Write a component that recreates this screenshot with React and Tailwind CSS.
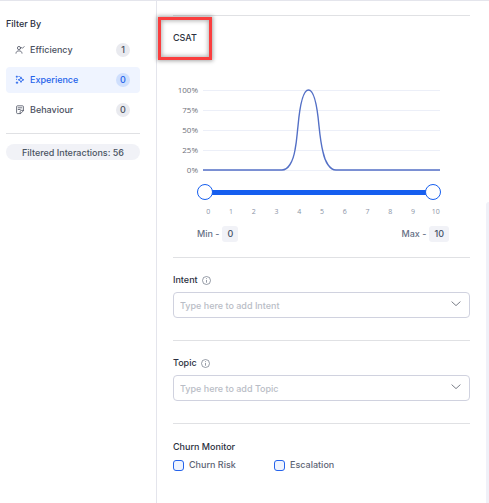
import { useState } from "react";

const FILTERS = [
  { name: "Efficiency", count: 1, icon: PersonIcon },
  { name: "Experience", count: 0, icon: SparkIcon },
  { name: "Behaviour", count: 0, icon: NoteIcon },
];
const LEVELS = ["100%", "75%", "50%", "25%", "0%"];
const TICKS = [0, 1, 2, 3, 4, 5, 6, 7, 8, 9, 10];

function PersonIcon() {
  return (
    <svg className="size-[10px] shrink-0" viewBox="0 0 10 10" fill="none" stroke="currentColor" strokeWidth="0.8" strokeLinecap="round" aria-hidden="true">
      <circle cx="4" cy="3" r="1.6" />
      <path d="M1 8.2C1.2 6.4 2.2 5.9 4 5.9S6.8 6.4 7 8.2" />
      <path d="M6.6 2.5l.8.8 1.7-1.7" />
    </svg>
  );
}

function SparkIcon() {
  return (
    <svg className="size-[10px] shrink-0" viewBox="0 0 10 10" fill="none" stroke="currentColor" strokeWidth="0.9" strokeLinejoin="round" strokeLinecap="round" aria-hidden="true">
      <path d="M6 2.2l.8 1.8 2 .8-2 .8L6 7.4l-.8-1.8-2-.8 2-.8z" />
      <path d="M1.2 1.7h1.2M1.8 1.1v1.2M1.2 7.7h1.6M2 6.9v1.6M3.9 1.5h.4M1.4 4.3h.3" />
    </svg>
  );
}

function NoteIcon() {
  return (
    <svg className="size-[10px] shrink-0" viewBox="0 0 10 10" fill="none" stroke="currentColor" strokeWidth="0.8" strokeLinejoin="round" strokeLinecap="round" aria-hidden="true">
      <path d="M8.4 5.4V1.7a.9.9 0 0 0-.9-.9h-5a.9.9 0 0 0-.9.9v6c0 .5.4.9.9.9h2.7z" />
      <path d="M8.4 5.4H6.2c-.6 0-1 .4-1 1v2.2M3.2 2.8h3.6M3.2 4.5h2" />
    </svg>
  );
}

function InfoIcon() {
  return (
    <svg className="size-[9px] text-gray-500" viewBox="0 0 9 9" fill="none" stroke="currentColor" strokeWidth="0.7" aria-hidden="true">
      <circle cx="4.5" cy="4.5" r="4" />
      <path d="M4.5 4v2.7M4.5 2.2v.9" />
    </svg>
  );
}

function Sidebar() {
  return (
    <aside className="w-[157px] shrink-0 border-r border-[#e4e5ec] pt-[17px] pr-4 pl-[6px]">
      <h2 className="mb-[7px] leading-3">Filter By</h2>
      <nav className="flex flex-col gap-1">
        {FILTERS.map(({ name, count, icon: Icon }) => {
          const active = name === "Experience";
          return (
            <button
              key={name}
              type="button"
              className={`flex h-[26px] items-center rounded-[4px] pr-[10px] pl-[9px] font-medium ${active ? "bg-[#eff4ff] text-[#2563eb]" : "text-[#4b5161]"}`}
            >
              <Icon />
              <span className="ml-[5px]">{name}</span>
              <span className={`ml-auto h-[14px] min-w-[14px] rounded-full px-1 text-center leading-[14px] ${active ? "bg-[#cfdffd]" : "bg-[#e9eaef]"}`}>
                {count}
              </span>
            </button>
          );
        })}
      </nav>
      <hr className="my-[10px] border-[#e0e1e4]" />
      <p className="h-4 rounded-full bg-[#f1f2f7] text-center leading-[17px] text-[#4b5563]">Filtered Interactions: 56</p>
    </aside>
  );
}

function CsatChart() {
  return (
    <div className="flex pr-[30px] font-['Open_Sans','Noto_Sans',sans-serif] text-[8px] font-normal text-[#6e7079]">
      <div className="-my-[10px] w-[25px] shrink-0 text-right">
        {LEVELS.map((level) => (
          <div key={level} className="h-5 leading-5">{level}</div>
        ))}
      </div>
      <svg className="ml-[5px] h-20 min-w-0 flex-1 overflow-visible" viewBox="0 0 237 80" preserveAspectRatio="none" role="img" aria-label="CSAT distribution">
        <path d="M0 .5H237M0 20.5H237M0 40.5H237M0 60.5H237M0 80.5H237" stroke="#eceff8" />
        <path
          d="M0 80H79C85 80 90 72 92 60C94 50 94 44 95 36C97 14 100 0 105.500 0C111 0 114 14 116 36C117 46 118 54 120 62C122 72 127 80 133 80H237"
          fill="none"
          stroke="#5470c6"
          strokeWidth="1.4"
        />
      </svg>
    </div>
  );
}

const THUMB =
  "pointer-events-none absolute inset-0 m-0 w-full appearance-none bg-transparent [&::-webkit-slider-thumb]:pointer-events-auto [&::-webkit-slider-thumb]:size-4 [&::-webkit-slider-thumb]:appearance-none [&::-webkit-slider-thumb]:rounded-full [&::-webkit-slider-thumb]:border [&::-webkit-slider-thumb]:border-[#155eef] [&::-webkit-slider-thumb]:bg-white";

function RangeSlider() {
  const [min, setMin] = useState(0);
  const [max, setMax] = useState(10);
  return (
    <div className="mt-[14px] pr-[21px] pl-6">
      <div className="relative mr-2 h-4">
        <div className="absolute inset-x-2 top-[6px] h-[5px] bg-[#155eef]" />
        <input className={THUMB} type="range" aria-label="Minimum CSAT" min="0" max="10" value={min} onChange={(e) => setMin(Math.min(+e.target.value, max))} />
        <input className={THUMB} type="range" aria-label="Maximum CSAT" min="0" max="10" value={max} onChange={(e) => setMax(Math.max(+e.target.value, min))} />
      </div>
      <div className="mt-[6px] -mr-[2px] flex pr-1 font-['Open_Sans','Noto_Sans',sans-serif] text-[7px] leading-3 text-[#8a93a5]">
        {TICKS.map((tick) => (
          <span key={tick} className="flex-1 text-center">{tick}</span>
        ))}
      </div>
      <div className="mt-2 flex justify-between leading-4 text-[#667085]">
        <span className="flex gap-[3px]">
          Min -
          <output className="rounded-[3px] bg-[#f1f2f7] px-[5px] text-[#475467]">{min}</output>
        </span>
        <span className="flex gap-[3px]">
          Max -
          <output className="rounded-[3px] bg-[#f1f2f7] px-[5px] text-[#475467]">{max}</output>
        </span>
      </div>
    </div>
  );
}

function TagField({ id, label }) {
  return (
    <section className="mt-[15px] border-t border-[#e0e1e4] pt-4">
      <label htmlFor={id} className="flex items-center gap-1 leading-3">
        {label}
        <InfoIcon />
      </label>
      <div className="relative mt-[6px] mb-[22px]">
        <input id={id} type="text" placeholder={`Type here to add ${label}`} className="h-[26px] w-full rounded-[4px] border border-[#d0d2df] bg-white pr-6 pl-[6px] placeholder:text-[#b9bdc6]" />
        <svg className="pointer-events-none absolute top-[9px] right-[9px] h-[6px] w-[10px]" viewBox="0 0 10 6" fill="none" stroke="#7a7e88" aria-hidden="true">
          <path d="M.6 .6l4.400 4 4.400-4" />
        </svg>
      </div>
    </section>
  );
}

function Check({ label }) {
  return (
    <label className="flex w-[101px] items-center gap-[5px] text-[#5d6474]">
      <input type="checkbox" className="size-[11px] shrink-0 appearance-none rounded-[3px] border border-[#2563eb] bg-[#eff4ff] checked:bg-[#2563eb]" />
      {label}
    </label>
  );
}

export default function App() {
  return (
    <div className="flex min-h-screen border-t border-[#e4e5ec] bg-white font-['Inter',sans-serif] text-[9px] font-medium text-[#2b3040]">
      <Sidebar />
      <main className="min-w-0 flex-1 pt-[14px] pr-4 pl-4">
        <section className="relative border-t border-[#e0e1e4] pt-4">
          <h3 className="leading-3">CSAT</h3>
          <div className="absolute top-[1px] -left-[15px] h-[43px] w-[54px] border-[3px] border-[#fa3e3e] shadow-[0_0_4px_1px_rgba(0,0,0,0.35),inset_0_0_4px_1px_rgba(0,0,0,0.3)]" />
          <div className="mt-[46px]">
            <CsatChart />
            <RangeSlider />
          </div>
        </section>
        <TagField id="intent" label="Intent" />
        <TagField id="topic" label="Topic" />
        <fieldset className="border-t border-[#e0e1e4] pt-[17px] pb-8">
          <legend className="float-left w-full leading-3">Churn Monitor</legend>
          <div className="clear-both flex pt-[6px] leading-3">
            <Check label="Churn Risk" />
            <Check label="Escalation" />
          </div>
        </fieldset>
      </main>
      <div className="mt-[201px] w-[3px] shrink-0 rounded-tl-sm bg-[#f0f1f8]" />
    </div>
  );
}
